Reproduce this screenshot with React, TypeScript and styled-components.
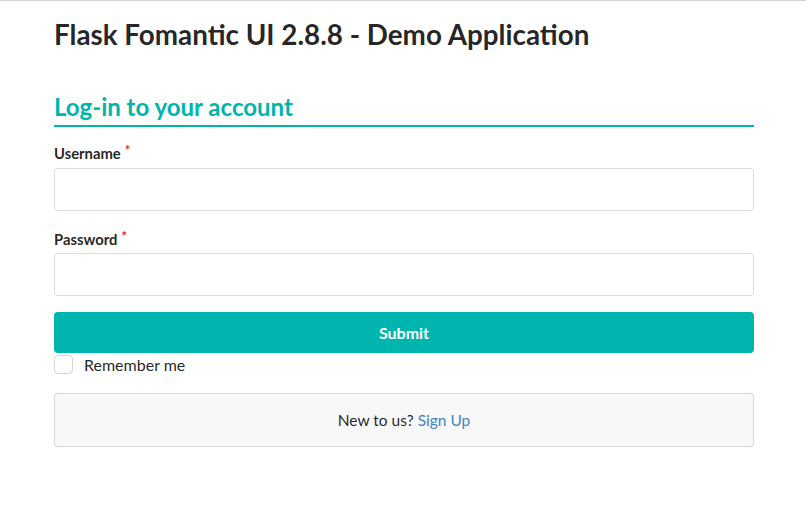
import React from "react";
import styled, { createGlobalStyle } from "styled-components";

const Global = createGlobalStyle`
  html, body { margin: 0; padding: 0; background: #fff; }
  body { font-family: Lato, "Helvetica Neue", Arial, sans-serif; font-size: 14px; color: rgba(0,0,0,.87); }
  * { box-sizing: border-box; }
`;

const TopBar = styled.div`
  height: 1px;
  background: #d4d4d5;
`;

const Container = styled.div`
  width: 700px;
  margin-left: 54px;
  padding-top: 16px;
`;

const Title = styled.h1`
  margin: 0;
  font-size: 27.8px;
  line-height: 36px;
  font-weight: 700;
  color: rgba(0,0,0,.87);
`;

const SectionHeader = styled.h2`
  margin: 38px 0 0;
  font-size: 24px;
  line-height: 31px;
  font-weight: 700;
  color: #00b5ad;
  padding-bottom: 3px;
  border-bottom: 2px solid #00b5ad;
`;

const Form = styled.form`
  display: flex;
  flex-direction: column;
  padding-top: 18px;
`;

const Field = styled.div<{ $gap?: number }>`
  display: flex;
  flex-direction: column;
  margin-bottom: ${(p) => p.$gap ?? 0}px;
`;

const Label = styled.label`
  display: block;
  height: 16px;
  font-size: 14.8px;
  font-weight: 700;
  line-height: 16px;
  margin-bottom: 6.6px;
  color: rgba(0,0,0,.87);
  &::after {
    content: "*";
    color: #db2828;
    margin-left: 4px;
    position: relative;
    top: -4px;
    font-size: 13px;
    line-height: 0;
  }
`;

const Input = styled.input`
  width: 100%;
  height: 43px;
  border: 1px solid rgba(34,36,38,.15);
  border-radius: 4px;
  padding: 0 14px;
  font-family: inherit;
  font-size: 14px;
  outline: none;
  background: #fff;
`;

const SubmitButton = styled.button`
  width: 100%;
  height: 41px;
  border: none;
  border-radius: 4px;
  background: #00b5ad;
  color: #fff;
  font-family: inherit;
  font-weight: 700;
  font-size: 16px;
  cursor: pointer;
`;

const CheckRow = styled.label`
  display: flex;
  align-items: center;
  margin-top: 2px;
  height: 19px;
  font-size: 16px;
  color: rgba(0,0,0,.87);
`;

const Box = styled.span`
  width: 19px;
  height: 19px;
  border: 1px solid #d4d4d5;
  border-radius: 4px;
  background: #fff;
  margin-right: 11px;
  flex: none;
`;

const Segment = styled.div`
  margin-top: 19px;
  height: 54px;
  display: flex;
  align-items: center;
  justify-content: center;
  background: #f8f8f8;
  border: 1px solid rgba(34,36,38,.15);
  border-radius: 4px;
  font-size: 15.5px;
  color: rgba(0,0,0,.87);
`;

const Link = styled.a`
  color: #4183c4;
  text-decoration: none;
  margin-left: 4px;
`;

export default function App() {
  return (
    <>
      <Global />
      <TopBar />
      <Container>
        <Title>Flask Fomantic UI 2.8.8 - Demo Application</Title>
        <SectionHeader>Log-in to your account</SectionHeader>
        <Form onSubmit={(e) => e.preventDefault()}>
          <Field $gap={20}>
            <Label>Username</Label>
            <Input type="text" />
          </Field>
          <Field $gap={16}>
            <Label>Password</Label>
            <Input type="password" />
          </Field>
          <SubmitButton type="submit">Submit</SubmitButton>
          <CheckRow>
            <Box />
            Remember me
          </CheckRow>
        </Form>
        <Segment>
          New to us?<Link href="#">Sign Up</Link>
        </Segment>
      </Container>
    </>
  );
}
